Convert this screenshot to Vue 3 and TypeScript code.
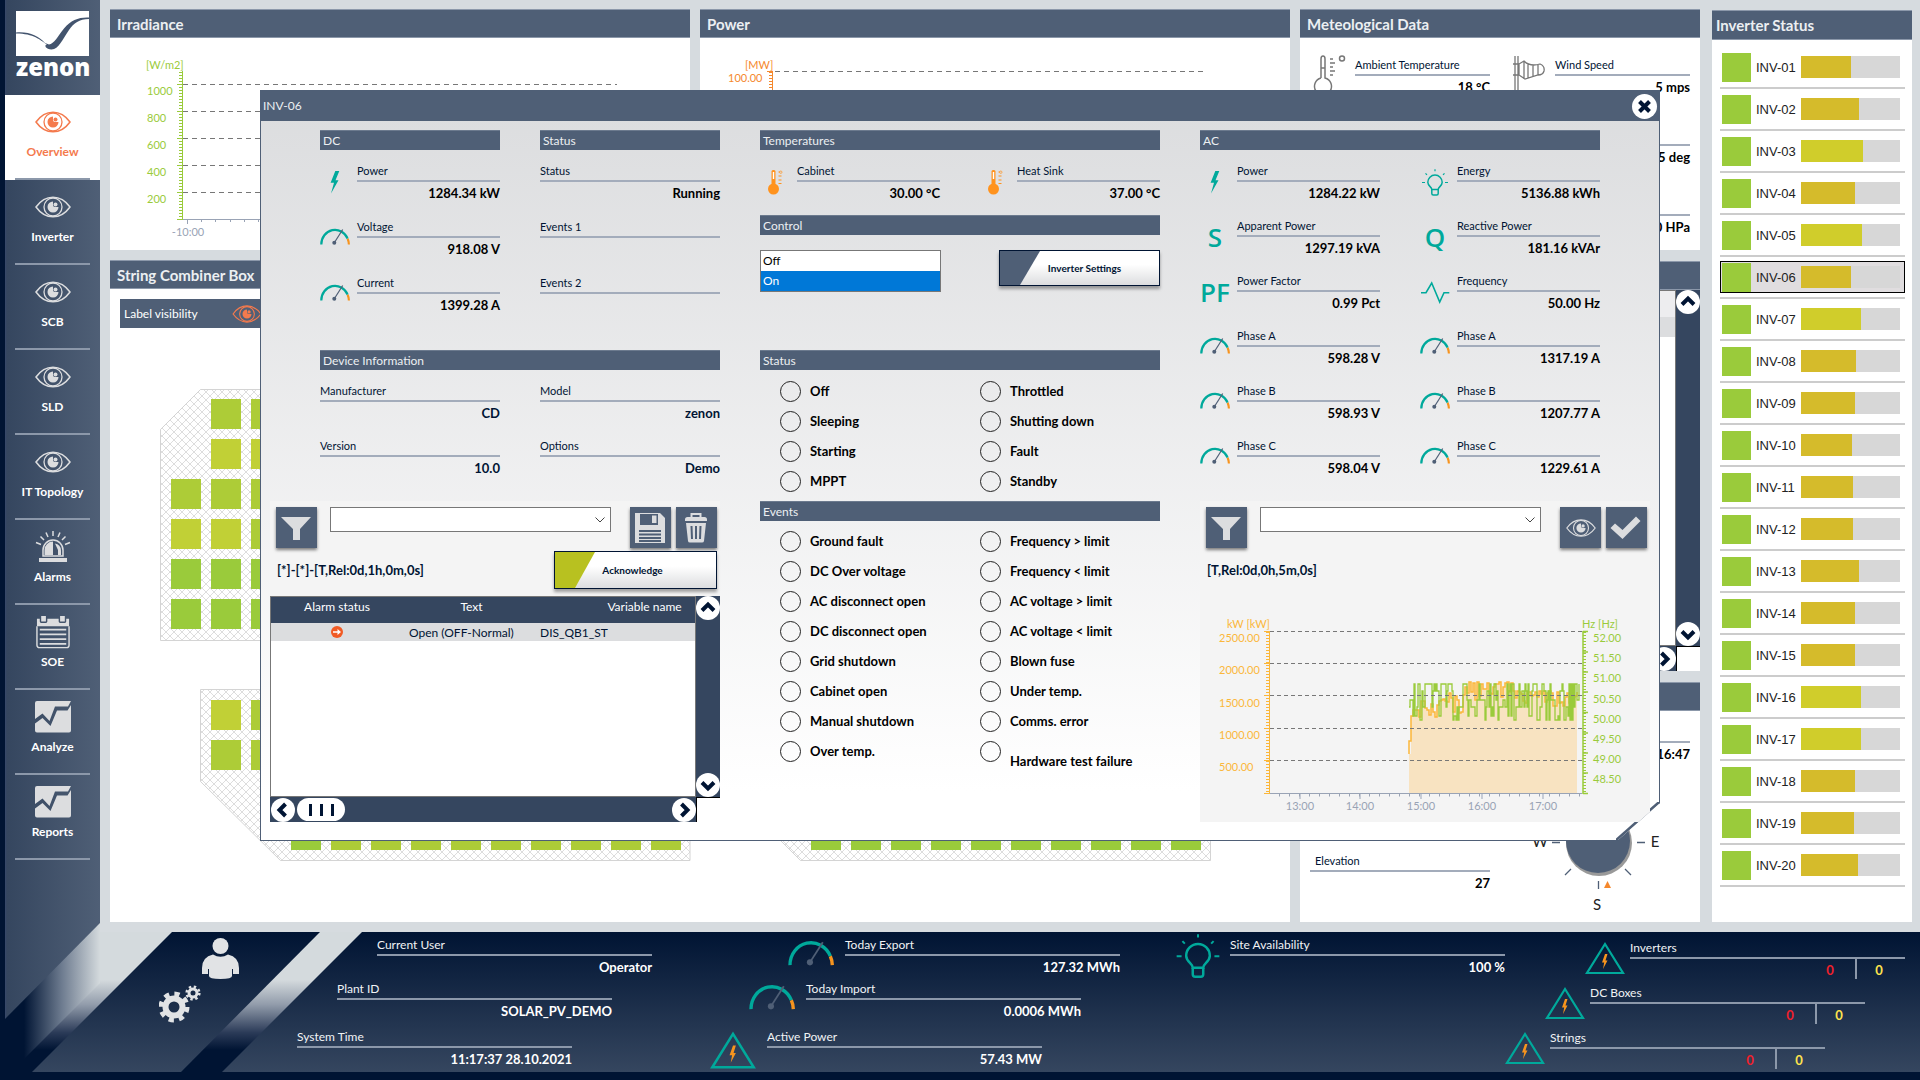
<script setup lang="ts">
import { ref } from 'vue'

interface Field { label: string; value: string; icon?: string; sym?: string }
interface Inverter { id: string; level: number }

const nav = [
  { label: 'Overview', icon: 'eye' },
  { label: 'Inverter', icon: 'eye' },
  { label: 'SCB', icon: 'eye' },
  { label: 'SLD', icon: 'eye' },
  { label: 'IT Topology', icon: 'eye' },
  { label: 'Alarms', icon: 'siren' },
  { label: 'SOE', icon: 'calendar' },
  { label: 'Analyze', icon: 'trend' },
  { label: 'Reports', icon: 'trend' },
]

const levels = [51, 59, 63, 55, 62, 51, 61, 56, 55, 52, 53, 53, 59, 55, 55, 61, 61, 55, 54, 58]
const inverters: Inverter[] = levels.map((level, i) => ({
  id: 'INV-' + String(i + 1).padStart(2, '0'),
  level,
}))
const selected = ref('INV-06')

const dc: Field[] = [
  { label: 'Power', value: '1284.34 kW', icon: 'bolt' },
  { label: 'Voltage', value: '918.08 V', icon: 'gauge' },
  { label: 'Current', value: '1399.28 A', icon: 'gauge' },
]
const dcStatus: Field[] = [
  { label: 'Status', value: 'Running' },
  { label: 'Events 1', value: '' },
  { label: 'Events 2', value: '' },
]
const device: Field[] = [
  { label: 'Manufacturer', value: 'CD' },
  { label: 'Model', value: 'zenon' },
  { label: 'Version', value: '10.0' },
  { label: 'Options', value: 'Demo' },
]
const temps: Field[] = [
  { label: 'Cabinet', value: '30.00 °C', icon: 'thermo' },
  { label: 'Heat Sink', value: '37.00 °C', icon: 'thermo' },
]
const ac: Field[] = [
  { label: 'Power', value: '1284.22 kW', icon: 'bolt' },
  { label: 'Energy', value: '5136.88 kWh', icon: 'bulb' },
  { label: 'Apparent Power', value: '1297.19 kVA', sym: 'S' },
  { label: 'Reactive Power', value: '181.16 kVAr', sym: 'Q' },
  { label: 'Power Factor', value: '0.99 Pct', sym: 'PF' },
  { label: 'Frequency', value: '50.00 Hz', icon: 'wave' },
  { label: 'Phase A', value: '598.28 V', icon: 'gauge' },
  { label: 'Phase A', value: '1317.19 A', icon: 'gauge' },
  { label: 'Phase B', value: '598.93 V', icon: 'gauge' },
  { label: 'Phase B', value: '1207.77 A', icon: 'gauge' },
  { label: 'Phase C', value: '598.04 V', icon: 'gauge' },
  { label: 'Phase C', value: '1229.61 A', icon: 'gauge' },
]
const states = ['Off', 'Throttled', 'Sleeping', 'Shutting down', 'Starting', 'Fault', 'MPPT', 'Standby']
const events = [
  'Ground fault', 'Frequency > limit', 'DC Over voltage', 'Frequency < limit',
  'AC disconnect open', 'AC voltage > limit', 'DC disconnect open', 'AC voltage < limit',
  'Grid shutdown', 'Blown fuse', 'Cabinet open', 'Under temp.',
  'Manual shutdown', 'Comms. error', 'Over temp.', 'Hardware test failure',
]
const control = ref('On')

const site: Field[] = [
  { label: 'Current User', value: 'Operator' },
  { label: 'Plant ID', value: 'SOLAR_PV_DEMO' },
  { label: 'System Time', value: '11:17:37 28.10.2021' },
]
const energy: Field[] = [
  { label: 'Today Export', value: '127.32 MWh', icon: 'gauge' },
  { label: 'Today Import', value: '0.0006 MWh', icon: 'gauge' },
  { label: 'Active Power', value: '57.43 MW', icon: 'warn' },
]
const counts = ['Inverters', 'DC Boxes', 'Strings']

/* string combiner box fields */
const G = '#9acb3b', L = '#adcc37', Y = '#c1d036'
const cells: { x: number; y: number; c: string }[] = []
const rowsA = [[null, L, L], [null, Y, Y], [L, L, L], [Y, Y, L], [G, G, G], [G, G, G]]
rowsA.forEach((r, j) => r.forEach((c, i) => { if (c) cells.push({ x: 61 + i * 40, y: 71 + j * 40, c }) }))
;[[Y, L], [L, L]].forEach((r, j) => r.forEach((c, i) => cells.push({ x: 101 + i * 40, y: 372 + j * 40, c })))
for (let i = 0; i < 10; i++) {
  cells.push({ x: 181 + i * 40, y: 492, c: i ? L : G })
  cells.push({ x: 701 + i * 40, y: 492, c: G })
}

/* trend curves */
let seed = 11
const rnd = () => { seed = (seed * 1103515245 + 12345) % 2147483648; return seed / 2147483648 }
const greenLevels = [88, 88, 95, 104, 111, 111, 120, 124]
let green = 'M209 111'
let orange = 'M209 158V145H211V120H212'
let area = 'M209 198V158H211V120H212'
for (let x = 210; x < 380; x += 1) {
  if (rnd() < 0.75) green += `H${x}V${greenLevels[Math.floor(rnd() * greenLevels.length)]}`
}
for (let x = 213; x < 379; x += 2) {
  const t = (x - 213) / 166
  const base = t < 0.16 ? 104 : t < 0.3 ? 97 : t < 0.6 ? 86 : 95
  const y = Math.round(base + rnd() * rnd() * 24)
  orange += `H${x}V${y}`
  area += `H${x}V${y}`
}
area += 'V198Z'
const times = [[100, '13:00'], [160, '14:00'], [221, '15:00'], [282, '16:00'], [343, '17:00']] as const
const hz = ['52.00', '51.50', '51.00', '50.50', '50.00', '49.50', '49.00', '48.50']
</script>

<template>
  <div class="app">
    <svg class="defs" width="0" height="0" aria-hidden="true">
      <symbol id="eye" viewBox="0 0 36 22">
        <g fill="none" stroke="currentColor">
          <path d="M1 11C6 4 12 1.200 18 1.200S30 4 35 11C30 18 24 20.800 18 20.800S6 18 1 11Z" stroke-width="1.500" />
          <circle cx="18" cy="11" r="9" stroke-width="1.300" />
        </g>
        <path d="M18 5.500a5.500 5.500 0 1 0 5.500 5.500H20a2 2 0 0 1-2-2Z" fill="currentColor" />
        <circle cx="20.500" cy="8.500" r="2" fill="currentColor" />
      </symbol>
      <symbol id="siren" viewBox="0 0 36 32">
        <path d="M4 27h28v4H4Z" fill="currentColor" />
        <path d="M8 25V19a10 10 0 0 1 20 0V25Z" fill="none" stroke="currentColor" stroke-width="1.500" />
        <path d="M9.500 24V19a8.500 8.500 0 0 1 8.500-8.500V24Z" fill="currentColor" />
        <path d="M20 12.500a7 7 0 0 1 6 7V24H23V19Z" fill="currentColor" />
        <path d="M18 0V5M11 1.500l2 4.500M25 1.500l-2 4.500M5.500 5.500l3.500 3.500M30.500 5.500L27 9M1 11.500l5 2M35 11.500l-5 2" stroke="currentColor" stroke-width="1.500" />
      </symbol>
      <symbol id="calendar" viewBox="0 0 36 36">
        <path d="M1 12V32a2.500 2.500 0 0 0 2.500 2.500h29A2.500 2.500 0 0 0 35 32V12" fill="none" stroke="currentColor" stroke-width="1.500" />
        <path d="M1 4h3v3a1.500 1.500 0 0 0 1.500 1.500h5A1.500 1.500 0 0 0 12 7V4h12v3a1.500 1.500 0 0 0 1.500 1.500h5A1.500 1.500 0 0 0 32 7V4h3v8H1Z" fill="currentColor" />
        <path d="M5.500 1h5v6h-5ZM25.500 1h5v6h-5Z" fill="currentColor" />
        <path d="M4 15.500h28M4 20.500h28M4 25.500h28M4 30.500h28" stroke="currentColor" stroke-width="1.800" />
      </symbol>
      <symbol id="trend" viewBox="0 0 36 32">
        <path d="M0 2a2 2 0 0 1 2-2H36L33 5.500H20L14.500 20L7.500 12.500L0 18Z" fill="currentColor" />
        <path d="M36 4V29.500a2 2 0 0 1-2 2H2a2 2 0 0 1-2-2V22.500L7.500 17L15.500 25L22 9.500H32.500Z" fill="currentColor" />
      </symbol>
      <symbol id="bolt" viewBox="0 0 30 42">
        <path d="M15.300 7H19.300L15.500 16.300H18.500L11 29.500L14 18.700H10.600Z" fill="#00a99b" />
      </symbol>
      <symbol id="gauge" viewBox="0 0 30 42">
        <path d="M1.300 24.500A13.700 14.500 0 0 1 27.600 18.700" fill="none" stroke="#00a99b" stroke-width="2.200" />
        <path d="M27.600 18.700A14 14 0 0 1 28.900 24.500" fill="none" stroke="#f7941e" stroke-width="2.200" />
        <path d="M14.300 22.700L22.700 9.500" stroke="#4f5f76" stroke-width="1.200" />
        <circle cx="14.300" cy="22.700" r="2" fill="#4f5f76" />
      </symbol>
      <symbol id="thermo" viewBox="0 0 30 42">
        <circle cx="13.500" cy="25" r="5.500" fill="#ff931e" />
        <rect x="11.500" y="6" width="4" height="18" rx="1.500" fill="#ff931e" />
        <path d="M13.500 8v7" stroke="#fff" stroke-width="1.400" />
        <path d="M18.500 8h1.500M18.500 12h3M18.500 16h3M18.500 19.500h3" stroke="#ff931e" />
        <circle cx="20.800" cy="8.200" r="1.200" fill="none" stroke="#ff931e" stroke-width=".7" />
      </symbol>
      <symbol id="bulb" viewBox="0 0 30 42">
        <g fill="none" stroke="#00a99b" stroke-width="1.500">
          <path d="M11.800 25.500c0-2.500-4-3.500-4-7.200a7.200 7.200 0 0 1 14.400 0c0 3.700-4 4.700-4 7.200Z" />
          <path d="M11.800 25.500v4q0 1.500 1.500 1.500h3.400q1.500 0 1.500-1.500v-4" />
          <path d="M15 5.200v2M2 18.500h3M25 18.500h3M5.500 9.300l1.500 1.600M24.500 9.300L23 10.900" stroke-width="1.200" />
        </g>
      </symbol>
      <symbol id="wave" viewBox="0 0 30 42">
        <path d="M1 18.700H6L11.700 9L19.700 28L24 18.700H29.300" fill="none" stroke="#00a99b" stroke-width="1.600" />
      </symbol>
      <symbol id="warn" viewBox="0 0 40 34">
        <path d="M20 3L38 32H2Z" fill="none" stroke="#00a99b" stroke-width="2.200" />
        <path d="M20 13H22.500L20.500 19.500H22.500L18 28L19.200 21.500H17Z" fill="#f7941e" />
      </symbol>
      <symbol id="funnel" viewBox="0 0 40 40">
        <path d="M5 9H35L24 21V32H17V21Z" fill="currentColor" />
      </symbol>
      <symbol id="save" viewBox="0 0 40 40">
        <path d="M5 5H30L35 10V35H5Z" fill="currentColor" />
        <path d="M10 6H28V17H10Z" fill="#4f5f76" />
        <path d="M22 7.500H26.500V15H22Z" fill="currentColor" />
        <path d="M9 23H31M9 26.500H31M9 30H31M9 33H31" stroke="#4f5f76" stroke-width="1.800" />
      </symbol>
      <symbol id="trash" viewBox="0 0 40 40">
        <path d="M9 11.500q0-2.500 2.500-2.500H28.500Q31 9 31 11.500V13H9ZM10 15H30L28 33Q27.800 34.500 26 34.500H14Q12.200 34.500 12 33Z" fill="currentColor" />
        <path d="M15.500 9V6H24.500V9" fill="none" stroke="currentColor" stroke-width="2" />
        <path d="M15.500 18L16 31M20 18V31M24.500 18L24 31" stroke="#4f5f76" stroke-width="2" />
      </symbol>
      <symbol id="check" viewBox="0 0 40 40">
        <path d="M4.500 20L9 15.500L16.500 22L30 8.500L34.500 13L16.500 31Z" fill="currentColor" />
      </symbol>
      <symbol id="chev" viewBox="0 0 24 24">
        <path d="M6 14.500L12 8.500L18 14.500" fill="none" stroke="#001433" stroke-width="4" />
      </symbol>
    </svg>

    <aside class="side">
      <nav>
        <div class="logo">
          <svg viewBox="0 0 73 45" width="73" height="45" aria-hidden="true">
            <rect width="73" height="45" fill="#fff" />
            <path d="M0 21.500C14 20.500 22 25 29 32L33 33.500C38 33 42 25 48 17.500C55 9 63 6 73 6.500V8C63 8 58 12 53 19C46 29 43 38 35.500 38.500C30 38.500 27.500 34 31 33.500C24 29 18 22.500 0 22.500Z" fill="#43546e" />
          </svg>
          <strong>zenon</strong>
        </div>
        <a v-for="(n, i) in nav" :key="n.label" href="#" class="nav" :class="{ on: i === 0 }">
          <span class="nav-icon"><svg width="36" height="34"><use :href="'#' + n.icon" /></svg></span>
          {{ n.label }}
        </a>
      </nav>
    </aside>

    <main>
      <div class="left">
        <div class="top">
          <section class="panel irr">
            <h2>Irradiance</h2>
            <svg class="canvas" width="580" height="210">
              <g fill="#9acb3b" font-size="11">
                <text x="36" y="31">[W/m2]</text>
                <text v-for="(t, i) in ['1000', '800', '600', '400', '200']" :key="t" x="37" :y="57 + i * 27">{{ t }}</text>
              </g>
              <path v-for="i in 5" :key="i" :d="`M73 ${19.500 + i * 27}H507`" stroke="#777" stroke-dasharray="5 4" />
              <path d="M70.500 34V182" stroke="#9acb3b" stroke-width="3" stroke-dasharray="1 2" />
              <path d="M72.500 33V182M67 46.500h6M67 73.500h6M67 100.500h6M67 127.500h6M67 154.500h6M67 181.500h6" stroke="#9acb3b" />
              <path d="M73 181.500H507M77.500 181v5M91.500 181v3M105.500 181v3M120.500 181v3M134.500 181v3M148.500 181v3" stroke="#99a3b5" />
              <text x="78" y="198" text-anchor="middle" font-size="11" fill="#99a3b5">-10:00</text>
            </svg>
          </section>
          <section class="panel pow">
            <h2>Power</h2>
            <svg class="canvas" width="590" height="210">
              <g fill="#f5882d" font-size="11">
                <text x="45" y="31">[MW]</text>
                <text x="28" y="44">100.00</text>
              </g>
              <path d="M75 33.500H507" stroke="#777" stroke-dasharray="5 4" />
              <path d="M70.500 34V182" stroke="#f5882d" stroke-width="3" stroke-dasharray="1 2" />
              <path d="M67 33.500H73M72.500 33V182" stroke="#f5882d" />
            </svg>
          </section>
        </div>
        <section class="panel grow">
          <h2>String Combiner Box</h2>
          <div class="labelbar">Label visibility <svg width="30" height="18"><use href="#eye" /></svg></div>
          <svg class="canvas" width="1180" height="590">
            <defs>
              <pattern id="hatch" width="8" height="8" patternUnits="userSpaceOnUse">
                <path d="M0 0L8 8M8 0L0 8" stroke="#d4d4d4" stroke-width=".8" />
              </pattern>
            </defs>
            <g fill="url(#hatch)" stroke="#d4d4d4">
              <path d="M50.500 101.500L90.500 61.500H580V312.500H50.500Z" />
              <path d="M90.500 361.500H580V532.500H170.500L90.500 453.500Z" />
              <path d="M611.500 361.500H1100.500V532.500H690.500L611.500 453.500Z" />
            </g>
            <rect v-for="(c, i) in cells" :key="i" :x="c.x" :y="c.y" width="30" height="30" :fill="c.c" />
          </svg>
        </section>
      </div>

      <div class="mid">
        <section class="panel met">
          <h2>Meteological Data</h2>
          <div class="met-grid">
            <div class="mfield">
              <svg width="35" height="42" fill="none" stroke="#777" stroke-width="1.500">
                <path d="M11 20V1q0-3 2-3t2 3V20a8.500 8.500 0 1 1-4 0M11 10h4M20 1h3M20 5h5M20 9h3M20 13h5M20 17h3" />
                <circle cx="32" cy="0.500" r="2.500" />
              </svg>
              <div class="fld"><span>Ambient Temperature</span><b>18 °C</b></div>
            </div>
            <div class="mfield">
              <svg width="35" height="42" fill="none" stroke="#777" stroke-width="1.300">
                <path d="M5 -2V42M8 -2V42M3 6h6M3 17h6M9 6L14 3Q20 9 30 6Q35 8 34 13Q33 17 28 17L15 21L9 17ZM14 3V21M18 6V20M23 7V18M28 6V17" />
              </svg>
              <div class="fld"><span>Wind Speed</span><b>5 mps</b></div>
            </div>
            <i></i><div class="mfield"><i></i><div class="fld"><span></span><b>5 deg</b></div></div>
            <i></i><div class="mfield"><i></i><div class="fld"><span></span><b>0 HPa</b></div></div>
          </div>
        </section>
        <section class="panel list2">
          <h2></h2>
          <div class="scroller">
            <div class="view"><div class="vhead"></div><div class="vrow"></div></div>
            <div class="vbar"><button aria-label="Scroll up"><svg><use href="#chev" /></svg></button><button aria-label="Scroll down"><svg class="down"><use href="#chev" /></svg></button></div>
            <div class="hbar"><i></i><button aria-label="Scroll right"><svg class="right"><use href="#chev" /></svg></button></div>
            <div class="corner"></div>
          </div>
        </section>
        <section class="panel sun">
          <h2></h2>
          <div class="sun-grid">
            <div class="fld elev"><span>Elevation</span><b>27</b></div>
            <div>
              <div class="fld"><span></span><b>16:47</b></div>
              <svg class="compass" width="180" height="145">
                <circle cx="89" cy="76" r="33" fill="#999" />
                <circle cx="88" cy="74" r="32" fill="#4f5f76" />
                <path d="M127 75.500h8M42 75.500h8M88.500 114v8M115 102l6 6M61 102l-6 6" stroke="#4f5f76" stroke-width="1.300" />
                <path d="M94 121L97.500 114L101 121Z" fill="#f5882d" />
                <g font-size="15" fill="#222" text-anchor="middle">
                  <text x="30" y="80">W</text><text x="145" y="80">E</text><text x="87" y="143">S</text>
                </g>
              </svg>
            </div>
          </div>
        </section>
      </div>

      <section class="panel status">
        <h2>Inverter Status</h2>
        <ul>
          <li v-for="v in inverters" :key="v.id">
            <button :class="{ sel: selected === v.id }" @click="selected = v.id">
              <i class="sq"></i><span>{{ v.id }}</span>
              <i class="bar"><i :class="{ hi: v.level > 60 }" :style="{ width: v.level + '%' }"></i></i>
            </button>
          </li>
        </ul>
      </section>
    </main>

    <svg class="cornerart" width="400" height="180" aria-hidden="true">
      <defs>
        <linearGradient id="gv" gradientUnits="userSpaceOnUse" x1="0" y1="80" x2="0" y2="150">
          <stop offset="0" stop-color="#d4dadd" /><stop offset=".35" stop-color="#929cab" /><stop offset=".75" stop-color="#2b3b58" /><stop offset="1" stop-color="#001433" />
        </linearGradient>
        <linearGradient id="gh" gradientUnits="userSpaceOnUse" x1="24" y1="0" x2="100" y2="0">
          <stop offset="0" stop-color="#001433" /><stop offset=".5" stop-color="#6e7c90" /><stop offset="1" stop-color="#d4dadd" />
        </linearGradient>
      </defs>
      <path d="M0 32H400V172H0Z" fill="url(#gv)" />
      <path d="M100 20V83L8 175H0V20Z" fill="url(#gh)" />
      <path d="M0 172H400V180H0Z" fill="#001433" />
    </svg>

    <footer>
      <div class="quick">
        <button class="user" aria-label="User">
          <svg width="37" height="42" viewBox="0 0 37 42"><g fill="#e1e3e5"><circle cx="18.500" cy="8" r="8" /><path d="M11 16.500Q18.500 21 26 16.500Q37 19 37 30V36H31V31H30V38Q30 41 18.500 41T7 38V31H6V36H0V30Q0 19 11 16.500Z" /></g></svg>
        </button>
        <button class="gears" aria-label="Settings">
          <svg width="42" height="38" viewBox="0 0 42 38">
            <g fill="none" stroke="#e1e3e5">
              <circle cx="15" cy="22" r="8.500" stroke-width="6" /><circle cx="15" cy="22" r="13" stroke-width="5" stroke-dasharray="5.100 5.110" />
              <circle cx="34" cy="8" r="4" stroke-width="3" /><circle cx="34" cy="8" r="6.300" stroke-width="2.600" stroke-dasharray="2.400 2.550" />
            </g>
          </svg>
        </button>
      </div>
      <div class="foot">
        <div class="grp g1"><div v-for="f in site" :key="f.label" class="fld"><span>{{ f.label }}</span><b>{{ f.value }}</b></div></div>
        <div class="grp g2">
          <div v-for="f in energy" :key="f.label" class="frow">
            <svg v-if="f.icon === 'gauge'" width="46" height="42" viewBox="0 7 30 27"><use href="#gauge" width="30" height="42" /></svg>
            <svg v-else width="48" height="40"><use href="#warn" /></svg>
            <div class="fld"><span>{{ f.label }}</span><b>{{ f.value }}</b></div>
          </div>
        </div>
        <div class="grp g3">
          <div class="frow">
            <svg width="50" height="46" viewBox="0 5 30 28"><use href="#bulb" width="30" height="42" /></svg>
            <div class="fld"><span>Site Availability</span><b>100 %</b></div>
          </div>
        </div>
        <div class="grp g4">
          <div v-for="c in counts" :key="c" class="frow">
            <svg width="40" height="34"><use href="#warn" /></svg>
            <div class="fld"><span>{{ c }}</span><div class="cnt"><b class="r">0</b><b class="y">0</b></div></div>
          </div>
        </div>
      </div>
    </footer>

    <div class="dialog" role="dialog" aria-label="INV-06">
      <svg class="cut" width="44" height="39" aria-hidden="true"><path d="M0 38.500L43.500 0" stroke="#4f5f76" stroke-width="3" /></svg>
      <header>INV-06 <button aria-label="Close"><svg width="25" height="25"><path d="M7.500 7.500L17.500 17.500M17.500 7.500L7.500 17.500" stroke="#001433" stroke-width="4" /></svg></button></header>
      <div class="body">
        <div class="col">
          <div class="blk b1 inset pair">
            <div><h3>DC</h3>
              <div class="fields loose">
                <div v-for="f in dc" :key="f.label" class="ifield"><svg width="30" height="42"><use :href="'#' + f.icon" /></svg><div class="fld"><span>{{ f.label }}</span><b>{{ f.value }}</b></div></div>
              </div>
            </div>
            <div><h3>Status</h3>
              <div class="fields loose"><div v-for="f in dcStatus" :key="f.label" class="fld"><span>{{ f.label }}</span><b>{{ f.value }}</b></div></div>
            </div>
          </div>
          <div class="blk b2 inset">
            <h3>Device Information</h3>
            <div class="fields two dark"><div v-for="f in device" :key="f.label" class="fld"><span>{{ f.label }}</span><b>{{ f.value }}</b></div></div>
          </div>
          <div class="tray">
            <div class="tools">
              <button class="ib" aria-label="Filter"><svg><use href="#funnel" /></svg></button>
              <select aria-label="Alarm filter"><option></option></select>
              <button class="ib save" aria-label="Save"><svg><use href="#save" /></svg></button>
              <button class="ib" aria-label="Delete"><svg><use href="#trash" /></svg></button>
            </div>
            <div class="filter"><b>[*]-[*]-[T,Rel:0d,1h,0m,0s]</b><button class="slab ack">Acknowledge</button></div>
            <div class="scroller alarms">
              <div class="view">
                <table>
                  <thead><tr><th class="c1">Alarm status</th><th class="c2">Text</th><th class="c3">Variable name</th></tr></thead>
                  <tbody><tr>
                    <td class="ctr"><svg width="12" height="12" viewBox="0 0 12 12"><circle cx="6" cy="6" r="6" fill="#f15a24" /><path d="M2 5.200h4.500V3L10 6L6.500 9V6.800H2Z" fill="#fff" /></svg></td>
                    <td class="txt">Open (OFF-Normal)</td><td>DIS_QB1_ST</td>
                  </tr></tbody>
                </table>
              </div>
              <div class="vbar"><button aria-label="Scroll up"><svg><use href="#chev" /></svg></button><button aria-label="Scroll down"><svg class="down"><use href="#chev" /></svg></button></div>
              <div class="hbar"><button aria-label="Scroll left"><svg class="lft"><use href="#chev" /></svg></button><span class="thumb"><i></i><i></i><i></i></span><button class="end" aria-label="Scroll right"><svg class="right"><use href="#chev" /></svg></button></div>
              <div class="corner"></div>
            </div>
          </div>
        </div>

        <div class="col">
          <div class="blk t1"><h3>Temperatures</h3>
            <div class="fields two">
              <div v-for="f in temps" :key="f.label" class="ifield"><svg width="30" height="42"><use href="#thermo" /></svg><div class="fld"><span>{{ f.label }}</span><b>{{ f.value }}</b></div></div>
            </div>
          </div>
          <div class="blk t2"><h3>Control</h3>
            <div class="ctl">
              <div class="listbox" role="listbox" aria-label="Control">
                <button v-for="o in ['Off', 'On']" :key="o" role="option" :aria-selected="control === o" :class="{ on: control === o }" @click="control = o">{{ o }}</button>
              </div>
              <button class="slab">Inverter Settings</button>
            </div>
          </div>
          <div class="blk b2"><h3>Status</h3>
            <div class="radios"><label v-for="s in states" :key="s"><input type="radio" name="state" />{{ s }}</label></div>
          </div>
          <div class="blk"><h3>Events</h3>
            <div class="radios ev"><label v-for="s in events" :key="s"><input type="checkbox" /><span>{{ s }}</span></label></div>
          </div>
        </div>

        <div class="col">
          <div class="blk acb"><h3>AC</h3>
            <div class="fields two">
              <div v-for="(f, i) in ac" :key="i" class="ifield">
                <span v-if="f.sym" class="sym">{{ f.sym }}</span>
                <svg v-else width="30" height="42"><use :href="'#' + f.icon" /></svg>
                <div class="fld"><span>{{ f.label }}</span><b>{{ f.value }}</b></div>
              </div>
            </div>
          </div>
          <div class="tray">
            <div class="tools">
              <button class="ib" aria-label="Filter"><svg><use href="#funnel" /></svg></button>
              <select aria-label="Trend filter"><option></option></select>
              <button class="ib save" aria-label="Show"><svg class="pad"><use href="#eye" /></svg></button>
              <button class="ib" aria-label="Apply"><svg><use href="#check" /></svg></button>
            </div>
            <div class="filter"><b>[T,Rel:0d,0h,5m,0s]</b></div>
            <svg class="chart" width="450" height="225">
              <path :d="area" fill="#f8e3c1" />
              <path :d="orange" fill="none" stroke="#fbb73a" stroke-width="1.500" />
              <path :d="green" fill="none" stroke="#9acb3b" stroke-width="1.300" />
              <path v-for="y in [35.500, 67.500, 99.500, 132.500, 164.500]" :key="y" :d="`M70 ${y}H382`" stroke="#777" stroke-dasharray="4 3" />
              <path d="M67.500 36V198" stroke="#fbb73a" stroke-width="3" stroke-dasharray="1 2" />
              <path d="M69.500 35V198M64 35.500h5M64 67.500h5M64 99.500h5M64 132.500h5M64 164.500h5M64 197.500h5" stroke="#fbb73a" />
              <path d="M384.500 36V198" stroke="#9acb3b" stroke-width="3" stroke-dasharray="1 2" />
              <path d="M383 35V198M383 35.500h5M383 56h5M383 76h5M383 96h5M383 116.500h5M383 137h5M383 157h5M383 177h5M383 197.500h5" stroke="#9acb3b" stroke-width="1.500" />
              <path d="M70 197.500H382" stroke="#99a3b5" />
              <path d="M79 199H382" stroke="#99a3b5" stroke-width="3" stroke-dasharray="1 9" />
              <g font-size="11" fill="#fbb73a">
                <text x="27" y="32">kW [kW]</text>
                <text v-for="(t, i) in ['2500.00', '2000.00', '1500.00', '1000.00', '500.00']" :key="t" x="19" :y="46 + Math.round(i * 32.300)">{{ t }}</text>
              </g>
              <g font-size="11" fill="#9acb3b">
                <text x="382" y="32">Hz [Hz]</text>
                <text v-for="(t, i) in hz" :key="t" x="393" :y="46 + Math.round(i * 20.200)">{{ t }}</text>
              </g>
              <g font-size="11" fill="#99a3b5" text-anchor="middle">
                <template v-for="t in times" :key="t[0]"><path :d="`M${t[0]} 197v6`" stroke="#99a3b5" /><text :x="t[0]" y="214">{{ t[1] }}</text></template>
              </g>
            </svg>
          </div>
        </div>
      </div>
    </div>
  </div>
</template>

<style>
body { background: #d6dbdf; }
</style>

<style scoped>
* { box-sizing: border-box; }
.app { position: relative; display: grid; grid-template-columns: 100px 1fr; grid-template-rows: 1fr 148px; min-height: 100vh; background: #d6dbdf; font-family: Lato, "Open Sans", sans-serif; font-size: 12px; color: #000; overflow: hidden; }
.defs { position: absolute; }
button { font: inherit; color: inherit; border: 0; padding: 0; background: none; cursor: pointer; }
h2, h3, ul { margin: 0; padding: 0; }
i { font-style: normal; }

.side { grid-row: 1 / 3; grid-column: 1; z-index: 2; background: linear-gradient(90deg, #001433 5px, transparent 5px); padding-left: 5px; }
nav { height: 100%; background: linear-gradient(90deg, #36476a, #35465f 2%, #4f5f76); clip-path: polygon(0 0, 100% 0, 100% calc(100% - 157px), 0 calc(100% - 61px)); }
.logo { height: 95px; padding: 11px 0 0 11px; color: #fff; }
.logo svg { display: block; }
.logo strong { display: block; font: 800 24px/22px "Open Sans", sans-serif; }
.nav { display: flex; flex-direction: column; align-items: center; height: 85px; padding-top: 10px; color: #fff; font-weight: 700; font-size: 12px; line-height: 26px; text-decoration: none; background: linear-gradient(#8c98aa, #8c98aa) 10px 100% / 75px 2px no-repeat; }
.nav-icon { height: 34px; color: #dcdddf; }
.nav.on { background-color: #fff; color: #f47a4d; }
.nav.on .nav-icon { color: #f47a4d; }

main { grid-column: 2; display: flex; gap: 10px; padding: 9px 8px 10px 10px; min-width: 0; }
.left { flex: 1180 1 0; min-width: 0; display: flex; flex-direction: column; gap: 10px; }
.top { display: flex; gap: 10px; height: 241px; }
.irr { flex: 580 1 0; }
.pow { flex: 590 1 0; }
.mid { flex: 400 1 0; min-width: 0; display: flex; flex-direction: column; gap: 11px; }
.panel { background: #fff; overflow: hidden; min-width: 0; }
.panel h2 { height: 29px; background: #4f5f76; border: 1px solid #8c98aa; border-width: 1px 0; color: #eceff2; font-size: 15px; line-height: 29px; font-weight: 700; padding-left: 7px; }
.grow { flex: 1; height: 0; }
.canvas { display: block; }
.labelbar { margin: 10px 0 0 10px; width: 300px; height: 29px; background: #4f5f76; color: #fff; font-size: 12px; line-height: 30px; padding-left: 4px; display: flex; align-items: center; gap: 34px; }
.labelbar svg { color: #f47a4d; }

.fld { flex: 1; min-width: 0; font-size: 11px; }
.fld > span { display: block; height: 18px; line-height: 14px; border-bottom: 2px solid #a3acbb; color: #001433; white-space: nowrap; }
.fld > b { display: block; height: 24px; line-height: 23px; font-size: 13px; text-align: right; }
.met { height: 241px; }
.met-grid { display: grid; grid-template-columns: 1fr 1fr; gap: 28px 20px; padding: 20px 10px 0; }
.mfield { display: flex; gap: 10px; }
.mfield svg { overflow: visible; }
.mfield > i { width: 35px; }
.list2 { flex: 1; display: flex; flex-direction: column; }
.scroller { flex: 1; display: grid; grid-template-columns: 1fr 24px; grid-template-rows: 1fr 25px; }
.view { border: 1px solid #777; background: #fff; overflow: hidden; }
.vhead { height: 26px; background: #ededef; }
.vrow { height: 20px; background: #dcdddf; }
.vbar { background: #35465f; display: flex; flex-direction: column; justify-content: space-between; }
.hbar { background: #35465f; display: flex; align-items: center; justify-content: space-between; gap: 2px; padding-left: 1px; }
.scroller button { width: 24px; height: 24px; border-radius: 50%; background: #fff; flex: none; }
.scroller button svg { width: 24px; height: 24px; display: block; }
.down { transform: rotate(180deg); }
.right { transform: rotate(90deg); }
.lft { transform: rotate(-90deg); }
.corner { background: #fff; border: 1px solid #000; border-width: 1px 0 0 1px; }
.thumb { width: 48px; height: 23px; border-radius: 12px; background: #fff; display: flex; gap: 8px; align-items: center; justify-content: center; }
.thumb i { width: 3px; height: 12px; background: #001433; }
.end { margin-left: auto; }
.sun { height: 240px; }
.sun-grid { display: grid; grid-template-columns: 1fr 1fr; gap: 20px; padding: 14px 10px 0; }
.elev { margin-top: 129px; }
.elev span { padding-left: 5px; }
.compass { display: block; overflow: visible; }

.status { flex: 0 0 200px; margin: 1px 0 0 2px; }
.status h2 { height: 30px; padding-left: 4px; }
.status ul { list-style: none; padding: 7px 7px 0 8px; }
.status li { height: 42px; padding-top: 4px; border-bottom: 2px solid #ccc; }
.status button { display: flex; align-items: center; width: 100%; height: 32px; border: 1px solid transparent; padding: 0 4px 0 1px; font: 13px "Liberation Sans", sans-serif; color: #222; text-align: left; }
.status button.sel { background: #e0dddf; border-color: #000; }
.status button span { width: 45px; margin-left: 5px; }
.sq { width: 29px; height: 29px; background: #9acb3b; }
.bar { flex: 1; height: 22px; background: #d7d7d7; }
.bar i { display: block; height: 100%; background: #d5bb2b; }
.bar i.hi { background: #d0cd2b; }

.cornerart { position: absolute; left: 0; bottom: 0; }
footer { grid-row: 2; grid-column: 1 / 3; z-index: 1; display: flex; height: 140px; padding-left: 32px; }
.quick { flex: none; width: 288px; background: linear-gradient(#001433, #35465f); clip-path: polygon(140px 0, 100% 0, 149px 100%, 0 100%); display: flex; flex-direction: column; align-items: flex-start; }
.quick svg { display: block; }
.user { margin: 6px 0 0 170px; }
.gears { margin: 5px 0 0 127px; }
.foot { flex: 1; margin-left: -98px; background: linear-gradient(#001433, #35465f); clip-path: polygon(140px 0, 100% 0, 100% 100%, 0 100%); display: flex; padding: 6px 15px 0 75px; color: #fff; }
.app::after { content: ""; position: absolute; left: 0; right: 0; bottom: 0; height: 8px; background: #001433; }
.foot .fld { font-size: 12px; }
.foot .fld > span { color: #f1f3f5; border-color: #8c98aa; }
.grp { display: grid; grid-template-rows: 44px 48px 42px; }
.frow { display: flex; }
.frow > svg { flex: none; }
.g1 { width: 355px; }
.g1 > :nth-child(1) { margin-left: 80px; }
.g1 > :nth-child(2) { margin: 0 40px; }
.g1 > :nth-child(3) { margin-right: 80px; }
.g2 { width: 410px; margin-left: 58px; }
.g2 > :nth-child(1) { margin-left: 78px; }
.g2 > :nth-child(2) { margin: 0 39px; }
.g2 > :nth-child(3) { margin-right: 78px; }
.g2 .frow > svg { width: 46px; margin-right: 11px; }
.g3 { width: 332px; margin-left: 53px; }
.g3 .frow > svg { margin: -4px 7px 0 0; }
.g4 { width: 400px; margin-left: auto; grid-template-rows: 45px 45px 45px; padding-top: 3px; }
.g4 > :nth-child(1) { margin-left: 80px; }
.g4 > :nth-child(2) { margin: 0 40px; }
.g4 > :nth-child(3) { margin-right: 80px; }
.g4 .frow > svg { margin-right: 5px; }
.cnt { display: flex; justify-content: flex-end; font-size: 13px; line-height: 23px; text-align: center; }
.cnt .r { width: 50px; color: #f0202c; }
.cnt .y { width: 50px; height: 20px; padding-right: 4px; color: #ffe34d; border-left: 2px solid #8c98aa; }

.dialog { position: absolute; z-index: 5; left: 260px; right: 260px; top: 90px; background: linear-gradient(#dbdcde, #fff 700px); border: 1px solid #4f5f76; clip-path: polygon(0 0, 100% 0, 100% calc(100% - 38px), calc(100% - 43px) 100%, 0 100%); }
.cut { position: absolute; right: -1px; bottom: -1px; }
.dialog header { height: 30px; background: #4f5f76; color: #eceff2; line-height: 30px; padding: 0 2px; display: flex; justify-content: space-between; align-items: center; }
.dialog header button { width: 25px; height: 25px; border-radius: 50%; background: #fff; }
.dialog header svg { display: block; }
.body { position: relative; display: grid; grid-template-columns: 450fr 400fr 450fr; gap: 40px; padding: 9px 9px 18px; }
.col { min-width: 0; }
.dialog h3 { height: 20px; background: #4f5f76; border-top: 1px solid #6c7a8e; color: #eceff2; font-size: 12px; font-weight: 400; line-height: 20px; padding-left: 3px; }
.inset { padding-left: 50px; }
.b1 { height: 220px; }
.b2 { height: 151px; }
.t1 { height: 85px; }
.t2 { height: 135px; }
.acb { height: 371px; padding-right: 50px; }
.pair { display: grid; grid-template-columns: 1fr 1fr; gap: 40px; }
.fields { padding-top: 14px; display: grid; gap: 13px 40px; }
.loose { row-gap: 14px; }
.two { grid-template-columns: 1fr 1fr; }
.dark b { color: #001433; }
.ifield { display: flex; gap: 7px; height: 42px; }
.ifield > svg { flex: none; }
.sym { width: 30px; display: flex; justify-content: center; color: #00a99b; font: 600 26px/36px "Open Sans", sans-serif; }
.tray { background: #f4f4f4; height: 321px; padding-top: 6px; }
.tools { display: flex; padding: 0 3px 0 6px; }
.ib { flex: none; width: 41px; height: 41px; background: #4f5f76; color: #dcdddf; box-shadow: 0 2px 3px rgba(0, 0, 0, .5); }
.ib svg { width: 40px; height: 40px; display: block; }
.ib svg.pad { width: 30px; margin: 0 auto; }
.tools select { appearance: none; flex: 1; height: 25px; margin: 0 0 0 13px; border: 1px solid #777; border-radius: 0; background: #fff url("data:image/svg+xml,%3Csvg xmlns='http://www.w3.org/2000/svg' width='10' height='6'%3E%3Cpath d='M.5.5L5 5L9.500.5' fill='none' stroke='%23444'/%3E%3C/svg%3E") no-repeat right 5px center; }
.save { margin: 0 5px 0 19px; }
.filter { display: flex; justify-content: space-between; align-items: center; height: 38px; margin: 3px 3px 7px 7px; font-size: 13px; color: #001433; }
.slab { position: relative; width: 161px; height: 36px; border: 1px solid #001433; background: linear-gradient(#fff 40%, #dcdddf); box-shadow: 0 3px 3px rgba(0, 0, 0, .35); font-size: 10px; font-weight: 700; color: #001433; padding-left: 10px; }
.slab::before { content: ""; position: absolute; inset: 0 auto 0 0; width: 40px; background: #4f5f76; clip-path: polygon(0 0, 100% 0, 50% 100%, 0 100%); }
.ack { width: 163px; height: 38px; padding: 0 6px 0 0; }
.ack::before { background: #b8c120; }
.alarms { height: 226px; }
table { border-collapse: collapse; table-layout: fixed; width: 100%; font-size: 12px; }
th { height: 26px; padding: 0 0 7px; background: #35465f; color: #fff; font-weight: 400; white-space: nowrap; }
.c1 { width: 132px; }
.c2 { width: 137px; }
.c3 { padding-left: 54px; }
td { height: 18px; padding: 0; background: #dcdddf; color: #001433; white-space: nowrap; }
.ctr { text-align: center; }
.ctr svg { display: block; margin: 0 auto; }
.txt { padding-left: 6px; }
.ctl { display: flex; justify-content: space-between; align-items: flex-start; padding-top: 15px; }
.listbox { width: 181px; border: 1px solid #777; background: #fff; }
.listbox button { display: block; width: 100%; height: 20px; padding-left: 2px; text-align: left; font-size: 12px; line-height: 20px; }
.listbox .on { background: #0078d7; color: #fff; }
.radios { padding: 6px 0 0 20px; display: grid; grid-template-columns: 200px 1fr; }
.radios label { display: flex; align-items: center; height: 30px; gap: 9px; font-size: 13px; font-weight: 700; white-space: nowrap; }
.ev { padding-top: 5px; }
.radios input { appearance: none; width: 21px; height: 21px; margin: 0; border: 1px solid #222; border-radius: 50%; }
.radios label:nth-child(16) span { padding-top: 20px; }
.chart { display: block; }
</style>
